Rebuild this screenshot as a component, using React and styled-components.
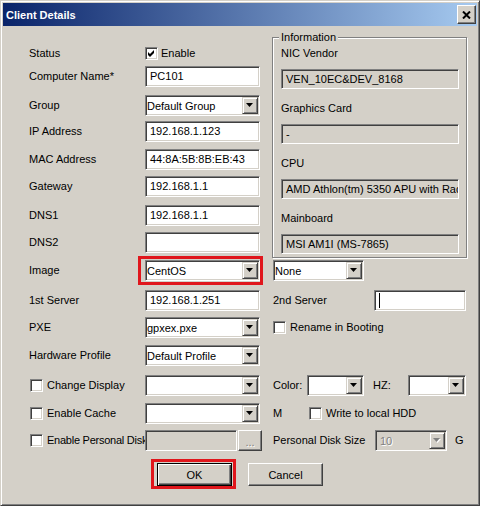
import React from 'react';
import styled, { createGlobalStyle, css } from 'styled-components';

const Global = createGlobalStyle`
  html, body { margin: 0; padding: 0; background: #D4D0C8; }
  body { font-family: "Liberation Sans", Arial, sans-serif; font-size: 11px; color: #000; }
  * { box-sizing: border-box; }
`;

const FONT = `"Liberation Sans", Arial, sans-serif`;

const Window = styled.div`
  width: 480px;
  height: 506px;
  background: #D4D0C8;
  border: 1px solid;
  border-color: #D4D0C8 #404040 #404040 #D4D0C8;
  box-shadow: inset 1px 1px 0 #fff, inset -1px -1px 0 #808080;
  padding: 2px;
  display: flex;
  flex-direction: column;
`;

const TitleBar = styled.div`
  height: 23px;
  flex-shrink: 0;
  display: flex;
  align-items: center;
  padding-left: 3px;
  background: linear-gradient(to right, #0A246A, #A6CAF0);
  color: #fff;
  font-weight: bold;
  font-size: 11px;
`;

const TitleText = styled.span`
  flex: 1;
`;

const CloseBtn = styled.div`
  width: 19px;
  height: 19px;
  margin-right: 1px;
  background: #D4D0C8;
  border: 1px solid;
  border-color: #fff #404040 #404040 #fff;
  box-shadow: inset -1px -1px 0 #808080;
  display: flex;
  align-items: center;
  justify-content: center;
`;

const Body = styled.div`
  flex: 1;
  padding: 5px 10px 0 26px;
  display: flex;
  flex-direction: column;
`;

const TopSection = styled.div`
  display: flex;
  align-items: flex-start;
`;

const LeftCol = styled.div`
  width: 231px;
  margin-right: 12px;
  padding-top: 12px;
  display: flex;
  flex-direction: column;
`;

const Row = styled.div`
  display: flex;
  align-items: center;
  height: ${p => p.$h || 21}px;
  margin-top: ${p => p.$mt || 0}px;
`;

const Label = styled.span`
  width: 116px;
  flex-shrink: 0;
  white-space: nowrap;
  overflow: hidden;
  line-height: 13px;
`;

const CheckLabel = styled.label`
  width: ${p => p.$w || 116}px;
  flex-shrink: 0;
  display: flex;
  align-items: center;
  gap: ${p => p.$gap ?? 4}px;
  padding-left: ${p => p.$pl || 0}px;
  margin-left: ${p => p.$ml || 0}px;
  white-space: nowrap;
  overflow: hidden;
  line-height: 13px;
  letter-spacing: ${p => (p.$tight ? '-0.25px' : 'normal')};
`;

const Box = styled.span`
  width: 13px;
  height: 13px;
  flex-shrink: 0;
  display: inline-flex;
  align-items: center;
  justify-content: center;
  background: #fff;
  border: 1px solid;
  border-color: #808080 #fff #fff #808080;
  box-shadow: inset 1px 1px 0 #404040, inset -1px -1px 0 #D4D0C8;
`;

const sunken = css`
  border: 1px solid;
  border-color: #808080 #fff #fff #808080;
  box-shadow: inset 1px 1px 0 #404040, inset -1px -1px 0 #D4D0C8;
`;

const raised = css`
  background: #D4D0C8;
  border: 1px solid;
  border-color: #D4D0C8 #404040 #404040 #D4D0C8;
  box-shadow: inset 1px 1px 0 #fff, inset -1px -1px 0 #808080;
`;

const TextBox = styled.div`
  width: ${p => p.$w || 115}px;
  height: ${p => p.$h || 21}px;
  flex-shrink: 0;
  ${sunken};
  background: ${p => (p.$gray ? '#D4D0C8' : '#fff')};
  display: flex;
  align-items: center;
  padding-left: 4px;
  white-space: nowrap;
  overflow: hidden;
  line-height: 13px;
`;

const Caret = styled.span`
  width: 1px;
  height: 15px;
  background: #000;
`;

const Combo = styled.div`
  width: ${p => p.$w || 115}px;
  height: 21px;
  flex-shrink: 0;
  ${sunken};
  background: ${p => (p.$disabled ? '#D4D0C8' : '#fff')};
  display: flex;
  align-items: stretch;
  padding: 1px;
`;

const ComboText = styled.span`
  flex: 1;
  display: flex;
  align-items: center;
  padding-left: ${p => (p.$disabled ? 3 : 0)}px;
  white-space: nowrap;
  overflow: hidden;
  color: ${p => (p.$disabled ? '#808080' : '#000')};
  text-shadow: ${p => (p.$disabled ? '1px 1px 0 #fff' : 'none')};
`;

const DropBtn = styled.span`
  width: 16px;
  flex-shrink: 0;
  ${raised};
  display: flex;
  align-items: center;
  justify-content: center;
`;

const RightCell = styled.div`
  margin-left: 13px;
  display: flex;
  align-items: center;
  flex: 1;
`;

const RightLabel = styled.span`
  width: ${p => (p.$w ? `${p.$w}px` : 'auto')};
  margin-left: ${p => p.$ml || 0}px;
  flex-shrink: 0;
  white-space: nowrap;
  line-height: 13px;
`;

const FieldGroup = styled.div`
  width: 115px;
  flex-shrink: 0;
  display: flex;
  gap: 1px;
`;

const DotsBtn = styled.span`
  width: 24px;
  height: 21px;
  flex-shrink: 0;
  background: #D4D0C8;
  border: 1px solid;
  border-color: #fff #404040 #404040 #fff;
  box-shadow: inset -1px -1px 0 #808080;
  display: flex;
  align-items: center;
  justify-content: center;
  color: #808080;
  text-shadow: 1px 1px 0 #fff;
  font-size: 11px;
  padding-top: 3px;
`;

const InfoBox = styled.fieldset`
  width: 196px;
  min-width: 0;
  margin: 0;
  padding: 3px 7px 3px 8px;
  border: 1px solid #808080;
  box-shadow: inset 1px 1px 0 #fff, 1px 1px 0 #fff;
  display: flex;
  flex-direction: column;
`;

const Legend = styled.legend`
  padding: 0 2px;
  margin-left: -2px;
  line-height: 13px;
  font-size: 11px;
  background: #D4D0C8;
`;

const InfoItem = styled.div`
  display: flex;
  flex-direction: column;
  margin-top: ${p => p.$mt || 0}px;
`;

const InfoLabel = styled.span`
  line-height: 13px;
  margin-bottom: 9px;
`;

const ButtonRow = styled.div`
  display: flex;
  gap: 16px;
  padding-left: 128px;
  margin-top: ${p => p.$mt || 0}px;
`;

const Button = styled.button`
  width: 75px;
  height: 23px;
  padding: 0;
  font: 11px ${FONT};
  color: #000;
  background: #D4D0C8;
  border: 1px solid;
  border-color: #fff #404040 #404040 #fff;
  box-shadow: inset -1px -1px 0 #808080;
  ${p =>
    p.$default &&
    css`
      border-color: #000;
      box-shadow: inset 1px 1px 0 #fff, inset -1px -1px 0 #404040, inset -2px -2px 0 #808080;
    `}
`;

const Highlight = styled.span`
  position: relative;
  display: inline-flex;
  flex-shrink: 0;
  &::after {
    content: '';
    position: absolute;
    top: ${p => p.$t}px;
    right: ${p => p.$r}px;
    bottom: ${p => p.$b}px;
    left: ${p => p.$l}px;
    border: 3px solid #E0161C;
    pointer-events: none;
  }
`;

const Arrow = ({ disabled }) => (
  <svg width="8" height="5" viewBox="0 0 8 5">
    {disabled && <polygon points="1,1 8,1 4.5,5" fill="#fff" />}
    <polygon points="0,0 7,0 3.5,4" fill={disabled ? '#808080' : '#000'} />
  </svg>
);

const Select = ({ w, value = '', disabled }) => (
  <Combo $w={w} $disabled={disabled}>
    <ComboText $disabled={disabled}>{value}</ComboText>
    <DropBtn>
      <Arrow disabled={disabled} />
    </DropBtn>
  </Combo>
);

const Check = ({ checked }) => (
  <Box>
    {checked && (
      <svg width="7" height="7" viewBox="0 0 7 7">
        <polygon points="0,2 2,4 6,0 6,3 2,7 0,5" fill="#000" />
      </svg>
    )}
  </Box>
);

const leftRows = [
  { label: 'Computer Name*', value: 'PC101', mt: 2 },
  { label: 'Group', value: 'Default Group', mt: 8, select: true },
  { label: 'IP Address', value: '192.168.1.123', mt: 5 },
  { label: 'MAC Address', value: '44:8A:5B:8B:EB:43', mt: 7 },
  { label: 'Gateway', value: '192.168.1.1', mt: 6 },
  { label: 'DNS1', value: '192.168.1.1', mt: 8 },
  { label: 'DNS2', value: '', mt: 6 },
];

const infoItems = [
  { label: 'NIC Vendor', value: 'VEN_10EC&DEV_8168' },
  { label: 'Graphics Card', value: '-' },
  { label: 'CPU', value: 'AMD Athlon(tm) 5350 APU with Radeon(tm) R3' },
  { label: 'Mainboard', value: 'MSI AM1I (MS-7865)' },
];

export default function App() {
  return (
    <>
      <Global />
      <Window>
        <TitleBar>
          <TitleText>Client Details</TitleText>
          <CloseBtn>
            <svg width="9" height="8" viewBox="0 0 9 8">
              <path d="M1 0.5 L8 7.5 M8 0.5 L1 7.5" stroke="#000" strokeWidth="2" />
            </svg>
          </CloseBtn>
        </TitleBar>
        <Body>
          <TopSection>
            <LeftCol>
              <Row>
                <Label>Status</Label>
                <CheckLabel $gap={3}>
                  <Check checked />
                  Enable
                </CheckLabel>
              </Row>
              {leftRows.map(r => (
                <Row key={r.label} $mt={r.mt}>
                  <Label>{r.label}</Label>
                  {r.select ? <Select value={r.value} /> : <TextBox>{r.value}</TextBox>}
                </Row>
              ))}
            </LeftCol>
            <InfoBox>
              <Legend>Information</Legend>
              {infoItems.map((it, i) => (
                <InfoItem key={it.label} $mt={i ? 13 : 0}>
                  <InfoLabel>{it.label}</InfoLabel>
                  <TextBox $w={178} $h={20} $gray>
                    {it.value}
                  </TextBox>
                </InfoItem>
              ))}
            </InfoBox>
          </TopSection>

          <Row $mt={2}>
            <Label>Image</Label>
            <Highlight $t={-4} $r={-3} $b={-4} $l={-7}>
              <Select value="CentOS" />
            </Highlight>
            <RightCell>
              <Select w={91} value="None" />
            </RightCell>
          </Row>

          <Row $mt={9}>
            <Label>1st Server</Label>
            <TextBox>192.168.1.251</TextBox>
            <RightCell>
              <RightLabel $w={101}>2nd Server</RightLabel>
              <TextBox $w={92}>
                <Caret />
              </TextBox>
            </RightCell>
          </Row>

          <Row $mt={6}>
            <Label>PXE</Label>
            <Select value="gpxex.pxe" />
            <RightCell>
              <CheckLabel $w={160}>
                <Check />
                Rename in Booting
              </CheckLabel>
            </RightCell>
          </Row>

          <Row $mt={7}>
            <Label>Hardware Profile</Label>
            <Select value="Default Profile" />
          </Row>

          <Row $mt={9}>
            <CheckLabel $pl={1}>
              <Check />
              Change Display
            </CheckLabel>
            <Select />
            <RightCell>
              <RightLabel $w={34}>Color:</RightLabel>
              <Select w={57} />
              <RightLabel $w={35} $ml={9}>HZ:</RightLabel>
              <Select w={58} />
            </RightCell>
          </Row>

          <Row $mt={7}>
            <CheckLabel $pl={1}>
              <Check />
              Enable Cache
            </CheckLabel>
            <Select />
            <RightCell>
              <RightLabel $w={36}>M</RightLabel>
              <CheckLabel $w={150}>
                <Check />
                Write to local HDD
              </CheckLabel>
            </RightCell>
          </Row>

          <Row $mt={6}>
            <CheckLabel $pl={1} $tight>
              <Check />
              Enable Personal Disk
            </CheckLabel>
            <FieldGroup>
              <TextBox $w={92} $gray />
              <DotsBtn>...</DotsBtn>
            </FieldGroup>
            <RightCell>
              <RightLabel $w={102}>Personal Disk Size</RightLabel>
              <Select w={72} value="10" disabled />
              <RightLabel $ml={8}>G</RightLabel>
            </RightCell>
          </Row>

          <ButtonRow $mt={12}>
            <Highlight $t={-4} $r={-4} $b={-3} $l={-6}>
              <Button $default>OK</Button>
            </Highlight>
            <Button>Cancel</Button>
          </ButtonRow>
        </Body>
      </Window>
    </>
  );
}
